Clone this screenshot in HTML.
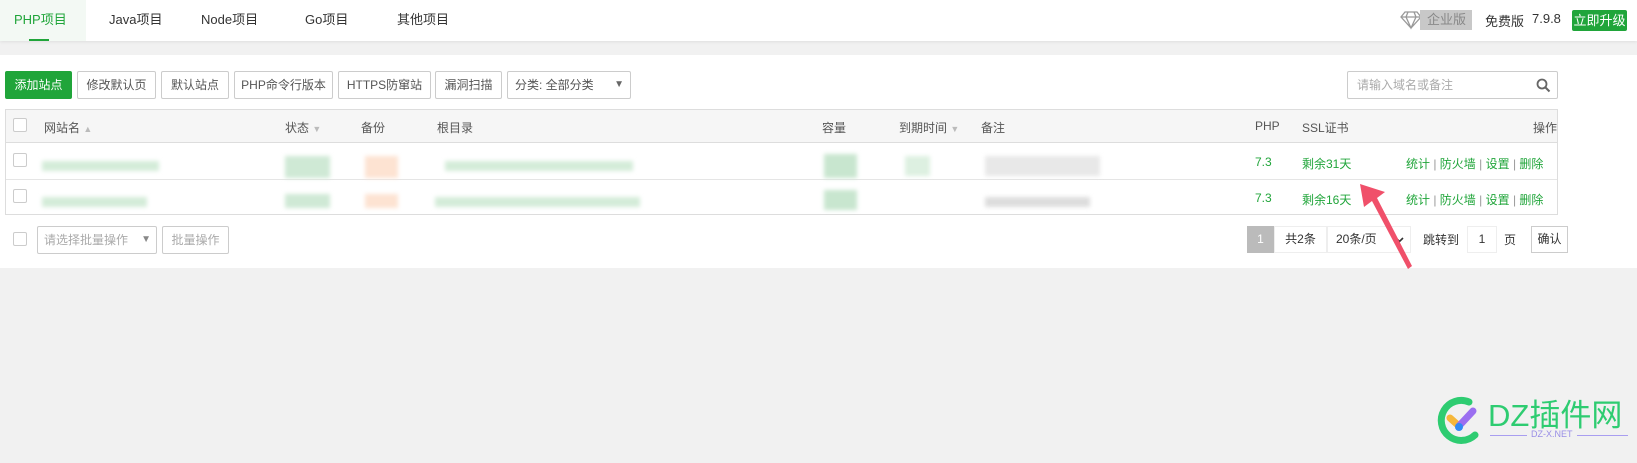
<!DOCTYPE html><html><head><meta charset="utf-8"><style>
*{box-sizing:border-box;margin:0;padding:0}
body{width:1637px;height:463px;background:#f1f1f1;font-family:"Liberation Sans","Noto Sans CJK SC",sans-serif;font-size:12px;color:#555;position:relative;overflow:hidden}
.a{position:absolute}
.top{left:0;top:0;width:1637px;height:41px;background:#fff;box-shadow:0 1px 3px rgba(0,0,0,.08)}
.tab{top:0;height:41px;line-height:40px;font-size:13px;color:#333}
.panel{left:0;top:55px;width:1637px;height:213px;background:#fff}
.btn{top:71px;height:28px;line-height:26px;border:1px solid #ccc;border-radius:2px;background:#fff;color:#555;text-align:center;font-size:12px}
.cb{width:14px;height:14px;border:1px solid #ccc;border-radius:2px;background:#fff}
.blur{filter:blur(2px)}
.g{color:#20a53a}
</style></head><body>
<div class="a top"></div>
<div class="a" style="left:0;top:0;width:86px;height:41px;background:#f3f9f4"></div>
<div class="a tab" style="left:14px;color:#20a53a">PHP项目</div>
<div class="a" style="left:29px;top:39px;width:20px;height:2px;background:#20a53a"></div>
<div class="a tab" style="left:109px">Java项目</div>
<div class="a tab" style="left:201px">Node项目</div>
<div class="a tab" style="left:305px">Go项目</div>
<div class="a tab" style="left:397px">其他项目</div>
<svg class="a" style="left:1400px;top:10px" width="22" height="20" viewBox="0 0 22 20"><path d="M5 2h12l4 5-10 11L1 7z M1 7h20 M8 2l-2 5 5 11 5-11-2-5" fill="none" stroke="#999" stroke-width="1.3"/></svg>
<div class="a" style="left:1420px;top:10px;width:52px;height:20px;background:#c8c8c8;color:#888;font-size:13px;line-height:20px;padding-left:7px">企业版</div>
<div class="a" style="left:1485px;top:11px;font-size:13px;color:#333">免费版</div>
<div class="a" style="left:1532px;top:11px;font-size:13px;color:#333">7.9.8</div>
<div class="a" style="left:1572px;top:10px;width:55px;height:21px;background:#20a53a;color:#fff;border-radius:2px;font-size:13px;line-height:21px;text-align:center">立即升级</div>
<div class="a panel"></div>
<div class="a btn" style="left:5px;width:67px;background:#20a53a;border-color:#20a53a;color:#fff">添加站点</div>
<div class="a btn" style="left:77px;width:79px">修改默认页</div>
<div class="a btn" style="left:161px;width:68px">默认站点</div>
<div class="a btn" style="left:234px;width:99px">PHP命令行版本</div>
<div class="a btn" style="left:338px;width:93px">HTTPS防窜站</div>
<div class="a btn" style="left:435px;width:67px">漏洞扫描</div>
<div class="a btn" style="left:507px;width:124px;text-align:left;padding-left:7px">分类: 全部分类<span style="position:absolute;right:6px;top:0;font-size:10px;color:#666">▼</span></div>
<div class="a btn" style="left:1347px;width:211px;text-align:left;padding-left:9px;color:#aaa">请输入域名或备注
<svg style="position:absolute;right:6px;top:6px" width="15" height="15" viewBox="0 0 15 15"><circle cx="6" cy="6" r="4.5" fill="none" stroke="#666" stroke-width="1.8"/><path d="M9.5 9.5l4 4" stroke="#666" stroke-width="2"/></svg></div>
<div class="a" style="left:5px;top:109px;width:1553px;height:106px;border:1px solid #ddd"></div>
<div class="a" style="left:6px;top:110px;width:1551px;height:33px;background:#f6f6f6;border-bottom:1px solid #ddd"></div>
<div class="a" style="left:6px;top:179px;width:1551px;height:1px;background:#e5e5e5"></div>
<div class="a cb" style="left:13px;top:118px"></div>
<div class="a cb" style="left:13px;top:153px"></div>
<div class="a cb" style="left:13px;top:189px"></div>
<div class="a" style="top:119px;left:44px">网站名 <span style="color:#bbb;font-size:9px">▲</span></div>
<div class="a" style="top:119px;left:285px">状态 <span style="color:#bbb;font-size:9px">▼</span></div>
<div class="a" style="top:119px;left:361px">备份</div>
<div class="a" style="top:119px;left:437px">根目录</div>
<div class="a" style="top:119px;left:822px">容量</div>
<div class="a" style="top:119px;left:899px">到期时间 <span style="color:#bbb;font-size:9px">▼</span></div>
<div class="a" style="top:119px;left:981px">备注</div>
<div class="a" style="top:119px;left:1255px">PHP</div>
<div class="a" style="top:119px;left:1302px">SSL证书</div>
<div class="a" style="top:119px;left:1533px">操作</div>
<div class="blur">
<div class="a" style="left:42px;top:161px;width:117px;height:10px;background:#d4ecd9"></div>
<div class="a" style="left:42px;top:197px;width:105px;height:10px;background:#d4ecd9"></div>
<div class="a" style="left:285px;top:156px;width:45px;height:22px;background:#cfe9d5"></div>
<div class="a" style="left:285px;top:194px;width:45px;height:14px;background:#cfe9d5"></div>
<div class="a" style="left:365px;top:156px;width:33px;height:22px;background:#fde3d2"></div>
<div class="a" style="left:365px;top:194px;width:33px;height:14px;background:#fde3d2"></div>
<div class="a" style="left:445px;top:161px;width:188px;height:10px;background:#d4ecd9"></div>
<div class="a" style="left:435px;top:197px;width:205px;height:10px;background:#d4ecd9"></div>
<div class="a" style="left:824px;top:154px;width:33px;height:24px;background:#c8e6cf"></div>
<div class="a" style="left:824px;top:190px;width:33px;height:20px;background:#c8e6cf"></div>
<div class="a" style="left:905px;top:156px;width:25px;height:20px;background:#ddf0e1"></div>
<div class="a" style="left:985px;top:156px;width:115px;height:20px;background:#e8e8e8"></div>
<div class="a" style="left:985px;top:197px;width:105px;height:10px;background:#ddd"></div>
</div>
<div class="a g" style="top:155px;left:1255px">7.3</div>
<div class="a g" style="top:155px;left:1302px">剩余31天</div>
<div class="a g" style="top:155px;left:1406px">统计 <span style="color:#999">|</span> 防火墙 <span style="color:#999">|</span> 设置 <span style="color:#999">|</span> 删除</div>
<div class="a g" style="top:191px;left:1255px">7.3</div>
<div class="a g" style="top:191px;left:1302px">剩余16天</div>
<div class="a g" style="top:191px;left:1406px">统计 <span style="color:#999">|</span> 防火墙 <span style="color:#999">|</span> 设置 <span style="color:#999">|</span> 删除</div>
<div class="a cb" style="left:13px;top:232px"></div>
<div class="a btn" style="left:37px;top:226px;width:120px;color:#aaa;text-align:left;padding-left:6px">请选择批量操作<span style="position:absolute;right:5px;font-size:10px;color:#888">▼</span></div>
<div class="a btn" style="left:162px;top:226px;width:67px;color:#aaa">批量操作</div>
<div class="a" style="left:1247px;top:226px;width:27px;height:27px;background:#bbb;color:#fff;text-align:center;line-height:27px">1</div>
<div class="a" style="left:1274px;top:226px;width:53px;height:27px;border:1px solid #eee;line-height:25px;text-align:center;color:#333">共2条</div>
<div class="a" style="left:1327px;top:226px;width:84px;height:27px;border:1px solid #eee;line-height:25px;padding-left:8px;color:#333">20条/页
<svg style="position:absolute;right:6px;top:10px" width="9" height="6" viewBox="0 0 9 6"><path d="M1 1l3.5 3.5L8 1" fill="none" stroke="#333" stroke-width="1.6"/></svg></div>
<div class="a" style="left:1423px;top:231px;color:#333">跳转到</div>
<div class="a" style="left:1467px;top:226px;width:30px;height:27px;border:1px solid #eee;line-height:25px;text-align:center;color:#333">1</div>
<div class="a" style="left:1504px;top:231px;color:#333">页</div>
<div class="a" style="left:1531px;top:226px;width:37px;height:27px;border:1px solid #ccc;line-height:25px;text-align:center;color:#333">确认</div>
<svg class="a" style="left:1355px;top:180px" width="60" height="95" viewBox="0 0 60 95"><path d="M5 4 L30 12 L22 18 L57 86 L53 89 L17 21 L9 27 Z" fill="#f0506a"/></svg>
<svg class="a" style="left:1435px;top:395px" width="50" height="50" viewBox="0 0 50 50"><path d="M34 7 A20 20 0 1 0 40 40" fill="none" stroke="#2ecc71" stroke-width="7" stroke-linecap="round"/><path d="M15 23l9 8" stroke="#f5b73b" stroke-width="7" stroke-linecap="round"/><path d="M24 31l14-15" stroke="#9b6ff0" stroke-width="7" stroke-linecap="round"/><circle cx="24" cy="32" r="4" fill="#2f8af5"/></svg>
<div class="a" style="left:1488px;top:398px;font-size:31px;color:#2ecc71;line-height:36px">DZ插件网</div>
<div class="a" style="left:1490px;top:435px;width:138px;height:1px;background:#a99ef0"></div>
<div class="a" style="left:1527px;top:429px;padding:0 4px;background:#f1f1f1;font-size:9px;color:#998ee6">DZ-X.NET</div>
</body></html>
